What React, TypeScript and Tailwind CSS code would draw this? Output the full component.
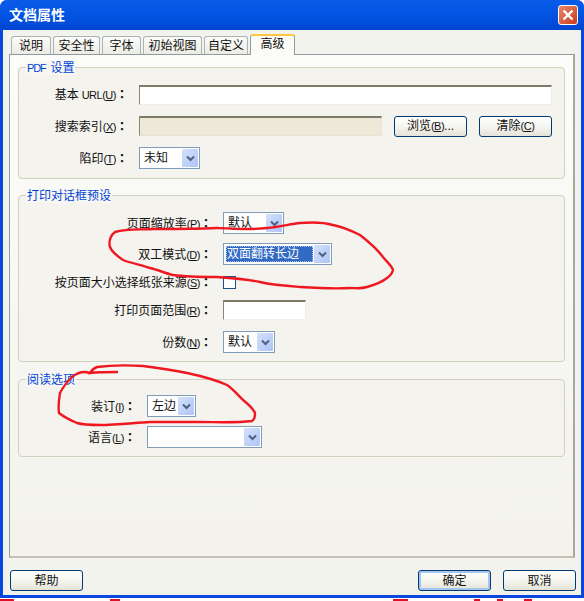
import React from "react";

const FONT = "font-['Liberation_Sans','Noto_Sans_CJK_SC',sans-serif]";

function Label({ width, text, k, latin }: { width: string; text: string; k: string; latin?: string }) {
  return (
    <div className={`${width} shrink-0 pr-[11px] text-right text-[12px] leading-[14px] text-[#111] whitespace-nowrap`}>
      {text}
      {latin && <span className="text-[11px] tracking-[-0.5px] ml-[3px]">{latin}</span>}
      <span className="text-[11px] tracking-[-0.5px]">
        (<u>{k}</u>)
      </span>
      <span className="font-['Noto_Sans_CJK_TC',sans-serif] font-bold">：</span>
    </div>
  );
}

function Chevron() {
  return (
    <div className="w-[16px] self-stretch my-[1px] mr-[1px] rounded-[1px] bg-gradient-to-br from-[#d5e1fb] to-[#aec4f5] flex items-center justify-center">
      <svg width="9" height="7" viewBox="0 0 9 7">
        <path d="M1 1.5 L4.5 5 L8 1.5" fill="none" stroke="#4d6185" strokeWidth="2" />
      </svg>
    </div>
  );
}

function Select({ w, h, text, selected }: { w: string; h: string; text?: string; selected?: boolean }) {
  return (
    <div className={`${w} ${h} border border-[#7f9db9] bg-white flex items-stretch`}>
      <div className={`flex-1 flex items-center min-w-0 py-[2px] text-[12px] text-[#111] whitespace-nowrap ${selected ? "pl-[2px] pr-[1px]" : "pl-[4px]"}`}>
        {selected ? (
          <div className="w-full h-full bg-[#316ac5] text-white flex items-center pl-[1px] outline-1 outline-dotted outline-[#a9bfe6] -outline-offset-1">
            {text}
          </div>
        ) : (
          text
        )}
      </div>
      <Chevron />
    </div>
  );
}

function Btn({ w, text, k, focus, suffix }: { w: string; text: string; k?: string; focus?: boolean; suffix?: string }) {
  return (
    <div
      className={`${w} h-[21px] rounded-[3px] border border-[#003c74] bg-gradient-to-b from-white via-[#f5f5ef] to-[#e5e3d8] flex items-center justify-center text-[12px] text-[#111] whitespace-nowrap ${
        focus ? "shadow-[inset_0_0_0_2px_#a5c4ee]" : ""
      }`}
    >
      {text}
      {k && (
        <span className="text-[11px] tracking-[-0.5px]">
          (<u>{k}</u>)
        </span>
      )}
      {suffix}
    </div>
  );
}

function Group({ title, latin, height, pt, children }: { title: string; latin?: string; height: string; pt: string; children: React.ReactNode }) {
  return (
    <div className={`relative ${height} ${pt} border border-[#d0d0bf] rounded-[4px] bg-[#f4f3ee]`}>
      <div className="absolute -top-[7px] left-[7px] bg-[#f8f7f3] px-[1px] text-[12px] leading-[14px] text-[#0046d5]">
        {latin && <span className="text-[11px] tracking-[-1.2px] mr-[5px]">{latin}</span>}
        {title}
      </div>
      {children}
    </div>
  );
}

function Tab({ w, label, active }: { w: string; label: string; active?: boolean }) {
  if (active) {
    return (
      <div className={`${w} h-[21px] -mb-[1px] pb-[3px] relative z-10 border-x border-[#919b9c] bg-[#fbfbf8] rounded-t-[3px] border-t-[2px] border-t-[#ffc73c] flex items-center justify-center text-[12px] text-[#111]`}>
        {label}
      </div>
    );
  }
  return (
    <div className={`${w} h-[18px] pt-[1px] border border-b-0 border-[#a9b4b9] rounded-t-[3px] bg-gradient-to-b from-[#fcfcfa] to-[#ecebe3] flex items-center justify-center text-[12px] text-[#111]`}>
      {label}
    </div>
  );
}

export default function App() {
  return (
    <div className={`relative w-[584px] h-[601px] bg-white overflow-hidden ${FONT}`}>
      <div className="h-[598px] flex flex-col rounded-t-[7px] overflow-hidden bg-[#0a46e0] px-[3px] pb-[3px]">
        <div className="-mx-[3px] h-[30px] shrink-0 bg-gradient-to-b from-[#0a5ce8] via-[#0353e2] to-[#0046d1] flex items-center justify-between pl-[9px] pr-[6px]">
          <span className="text-[14px] font-bold text-white">文档属性</span>
          <div className="w-[20px] h-[20px] rounded-[3px] border border-white bg-gradient-to-br from-[#e8866a] to-[#c8391a] flex items-center justify-center">
            <svg width="12" height="12" viewBox="0 0 12 12">
              <path d="M1.5 1.5 L10.5 10.5 M10.5 1.5 L1.5 10.5" stroke="white" strokeWidth="2.4" />
            </svg>
          </div>
        </div>
        <div className="flex-1 flex flex-col bg-[#f3f3ee] pl-[6px] pr-[6px]">
          <div className="flex items-end gap-[2px] pl-[2px] mt-[4px] h-[20px] shrink-0">
            <Tab w="w-[40px]" label="说明" />
            <Tab w="w-[47px]" label="安全性" />
            <Tab w="w-[39px]" label="字体" />
            <Tab w="w-[59px]" label="初始视图" />
            <Tab w="w-[44px]" label="自定义" />
            <Tab w="w-[45px]" label="高级" active />
          </div>
          <div className="h-[504px] shrink-0 border border-[#919b9c] border-r-[2px] border-b-[2px] border-r-[#a9a899] border-b-[#c4c2b3] bg-gradient-to-b from-[#fcfcfa] to-[#f3f2ec] px-[8px] pt-[12px] flex flex-col">
            <Group title="设置" latin="PDF" height="h-[112px]" pt="pt-[16px]">
              <div className="flex items-center h-[21px]">
                <Label width="w-[120px]" text="基本" latin="URL" k="U" />
                <div className="w-[413px] h-[20px] border border-[#f0efe6] border-t-[2px] border-t-[#7f7a65] border-l-[#8a8672] bg-white" />
              </div>
              <div className="flex items-center h-[22px] mt-[10px]">
                <Label width="w-[120px]" text="搜索索引" k="X" />
                <div className="w-[243px] h-[20px] border border-[#e6e3d4] border-t-[2px] border-t-[#7f7a65] border-l-[#8a8672] bg-[#ece9d8]" />
                <div className="ml-[12px]">
                  <Btn w="w-[73px]" text="浏览" k="B" suffix="..." />
                </div>
                <div className="ml-[12px]">
                  <Btn w="w-[73px]" text="清除" k="C" />
                </div>
              </div>
              <div className="flex items-center h-[22px] mt-[10px]">
                <Label width="w-[120px]" text="陷印" k="T" />
                <Select w="w-[61px]" h="h-[22px]" text="未知" />
              </div>
            </Group>
            <div className="h-[16px] shrink-0" />
            <Group title="打印对话框预设" height="h-[167px]" pt="pt-[16px]">
              <div className="flex items-center h-[22px]">
                <Label width="w-[204px]" text="页面缩放率" k="P" />
                <Select w="w-[61px]" h="h-[22px]" text="默认" />
              </div>
              <div className="flex items-center h-[22px] mt-[9px]">
                <Label width="w-[204px]" text="双工模式" k="D" />
                <Select w="w-[109px]" h="h-[22px]" text="双面翻转长边" selected />
              </div>
              <div className="flex items-center h-[14px] mt-[10px]">
                <Label width="w-[204px]" text="按页面大小选择纸张来源" k="S" />
                <div className="w-[13px] h-[13px] border border-[#1c5180] bg-white" />
              </div>
              <div className="flex items-center h-[20px] mt-[11px]">
                <Label width="w-[204px]" text="打印页面范围" k="R" />
                <div className="w-[83px] h-[20px] border border-[#f0efe6] border-t-[2px] border-t-[#7f7a65] border-l-[#8a8672] bg-white" />
              </div>
              <div className="flex items-center h-[22px] mt-[11px]">
                <Label width="w-[204px]" text="份数" k="N" />
                <Select w="w-[52px]" h="h-[22px]" text="默认" />
              </div>
            </Group>
            <div className="h-[17px] shrink-0" />
            <Group title="阅读选项" height="h-[78px]" pt="pt-[15px]">
              <div className="flex items-center h-[22px]">
                <Label width="w-[128px]" text="装订" k="I" />
                <Select w="w-[49px]" h="h-[22px]" text="左边" />
              </div>
              <div className="flex items-center h-[22px] mt-[9px]">
                <Label width="w-[128px]" text="语言" k="L" />
                <Select w="w-[115px]" h="h-[22px]" />
              </div>
            </Group>
          </div>
          <div className="flex items-start justify-between mt-[12px] pl-[1px] -mr-[1px]">
            <Btn w="w-[73px]" text="帮助" />
            <div className="flex gap-[12px]">
              <Btn w="w-[73px]" text="确定" focus />
              <Btn w="w-[73px]" text="取消" />
            </div>
          </div>
        </div>
      </div>
      <svg className="absolute inset-0 pointer-events-none" width="584" height="601" viewBox="0 0 584 601" fill="none">
        <path
          d="M110 247 C108 240 112 234 115 232 C128 228 140 230 153 229 C175 229 195 229 217 228 C235 229 250 230 267 228 C280 227 290 224 300 223 C312 222 323 222 333 225 C343 227 352 231 360 235 C369 242 377 249 383 257 C387 262 392 266 393 270 C392 274 390 276 387 278 C381 283 374 285 367 287 C361 289 356 288 350 288 C333 289 316 288 300 287 C287 286 273 285 260 282 C246 279 232 278 217 277 C203 277 187 277 173 275 C165 273 158 270 150 268 C141 265 131 263 123 260 C117 256 112 252 110 247 Z"
          stroke="#f01820"
          strokeWidth="2.4"
        />
        <path
          d="M118 372 C108 372 98 372 90 373 C92 370 94 368 97 367 C112 365 128 365 143 366 C158 368 172 370 187 373 C201 376 216 380 227 385 C233 389 238 395 243 400 C248 404 253 408 255 413 C255 417 254 420 252 421 C235 423 217 422 200 422 C183 422 167 422 150 422 C133 423 116 425 100 425 C92 425 84 425 77 423 C70 420 64 417 59 413 C58 406 59 399 60 393 C63 387 67 382 72 377 C77 373 84 371 90 373"
          stroke="#f01820"
          strokeWidth="2.4"
        />
        <path d="M0 600 H14 M110 600 H120 M393 600 H408 M474 600 H480 M497 600 H503 M524 600 H532" stroke="#e0102a" strokeWidth="2" />
      </svg>
    </div>
  );
}
